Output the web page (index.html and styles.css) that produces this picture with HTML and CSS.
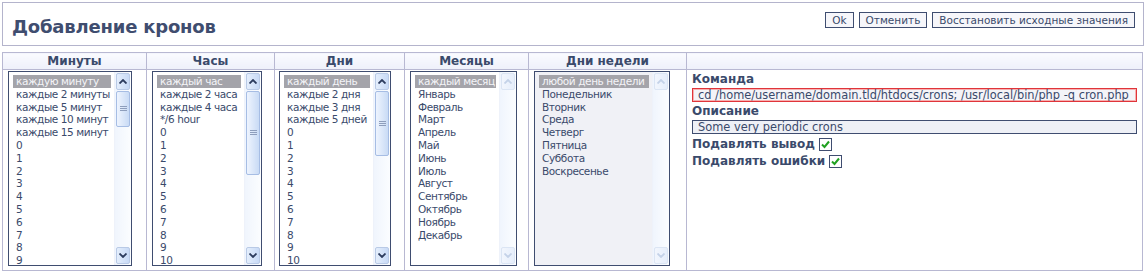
FILE: index.html
```html
<!DOCTYPE html>
<html lang="ru">
  <head>
    <meta charset="UTF-8" />
    <title>Добавление кронов</title>
    <link rel="stylesheet" href="styles.css">
  </head>
  <body>
    <div class="page-head">
      <h1>Добавление кронов</h1>
      <div class="actions">
        <button type="button">Ok</button>
        <button type="button">Отменить</button>
        <button type="button">Восстановить исходные значения</button>
      </div>
    </div>

    <table class="cron-form">
      <colgroup>
        <col class="c-min" /><col class="c-hour" /><col class="c-day" />
        <col class="c-month" /><col class="c-week" /><col />
      </colgroup>
      <tr>
        <th>Минуты</th>
        <th>Часы</th>
        <th>Дни</th>
        <th>Месяцы</th>
        <th>Дни недели</th>
        <th></th>
      </tr>
      <tr>
        <td>
          <div class="listbox lb-min">
            <ul class="options">
              <li class="selected">каждую минуту</li>
              <li>каждые 2 минуты</li>
              <li>каждые 5 минут</li>
              <li>каждые 10 минут</li>
              <li>каждые 15 минут</li>
              <li>0</li><li>1</li><li>2</li><li>3</li><li>4</li>
              <li>5</li><li>6</li><li>7</li><li>8</li><li>9</li><li>10</li>
            </ul>
            <div class="scrollbar">
              <span class="sb-btn"><svg viewBox="0 0 8 5"><path d="M0.5 4.5 L4 1 L7.5 4.5"/></svg></span>
              <div class="sb-track"><span class="sb-thumb thumb-min"><i></i></span></div>
              <span class="sb-btn"><svg viewBox="0 0 8 5"><path d="M0.5 0.5 L4 4 L7.5 0.5"/></svg></span>
            </div>
          </div>
        </td>
        <td>
          <div class="listbox lb-hour">
            <ul class="options">
              <li class="selected">каждый час</li>
              <li>каждые 2 часа</li>
              <li>каждые 4 часа</li>
              <li>*/6 hour</li>
              <li>0</li><li>1</li><li>2</li><li>3</li><li>4</li>
              <li>5</li><li>6</li><li>7</li><li>8</li><li>9</li><li>10</li>
            </ul>
            <div class="scrollbar">
              <span class="sb-btn"><svg viewBox="0 0 8 5"><path d="M0.5 4.5 L4 1 L7.5 4.5"/></svg></span>
              <div class="sb-track"><span class="sb-thumb thumb-hour"><i></i></span></div>
              <span class="sb-btn"><svg viewBox="0 0 8 5"><path d="M0.5 0.5 L4 4 L7.5 0.5"/></svg></span>
            </div>
          </div>
        </td>
        <td>
          <div class="listbox lb-day">
            <ul class="options">
              <li class="selected">каждый день</li>
              <li>каждые 2 дня</li>
              <li>каждые 3 дня</li>
              <li>каждые 5 дней</li>
              <li>0</li><li>1</li><li>2</li><li>3</li><li>4</li>
              <li>5</li><li>6</li><li>7</li><li>8</li><li>9</li><li>10</li>
            </ul>
            <div class="scrollbar">
              <span class="sb-btn"><svg viewBox="0 0 8 5"><path d="M0.5 4.5 L4 1 L7.5 4.5"/></svg></span>
              <div class="sb-track"><span class="sb-thumb thumb-day"><i></i></span></div>
              <span class="sb-btn"><svg viewBox="0 0 8 5"><path d="M0.5 0.5 L4 4 L7.5 0.5"/></svg></span>
            </div>
          </div>
        </td>
        <td>
          <div class="listbox lb-month">
            <ul class="options">
              <li class="selected">каждый месяц</li>
              <li>Январь</li>
              <li>Февраль</li>
              <li>Март</li>
              <li>Апрель</li>
              <li>Май</li>
              <li>Июнь</li>
              <li>Июль</li>
              <li>Август</li>
              <li>Сентябрь</li>
              <li>Октябрь</li>
              <li>Ноябрь</li>
              <li>Декабрь</li>
            </ul>
            <div class="scrollbar disabled">
              <span class="sb-btn"><svg viewBox="0 0 8 5"><path d="M0.5 4.5 L4 1 L7.5 4.5"/></svg></span>
              <div class="sb-track"></div>
              <span class="sb-btn"><svg viewBox="0 0 8 5"><path d="M0.5 0.5 L4 4 L7.5 0.5"/></svg></span>
            </div>
          </div>
        </td>
        <td>
          <div class="listbox lb-week">
            <ul class="options">
              <li class="selected">любой день недели</li>
              <li>Понедельник</li>
              <li>Вторник</li>
              <li>Среда</li>
              <li>Четверг</li>
              <li>Пятница</li>
              <li>Суббота</li>
              <li>Воскресенье</li>
            </ul>
            <div class="scrollbar disabled">
              <span class="sb-btn"><svg viewBox="0 0 8 5"><path d="M0.5 4.5 L4 1 L7.5 4.5"/></svg></span>
              <div class="sb-track"></div>
              <span class="sb-btn"><svg viewBox="0 0 8 5"><path d="M0.5 0.5 L4 4 L7.5 0.5"/></svg></span>
            </div>
          </div>
        </td>
        <td class="details">
          <label>Команда</label>
          <input type="text" class="field field-error" value="cd /home/username/domain.tld/htdocs/crons; /usr/local/bin/php -q cron.php" />
          <label>Описание</label>
          <input type="text" class="field" value="Some very periodic crons" />
          <label class="check">Подавлять вывод <span class="box"><svg viewBox="0 0 11 11"><path d="M2 5.5 L4.5 8 L9 2.5"/></svg></span></label>
          <label class="check">Подавлять ошибки <span class="box"><svg viewBox="0 0 11 11"><path d="M2 5.5 L4.5 8 L9 2.5"/></svg></span></label>
        </td>
      </tr>
    </table>
  </body>
</html>
```

FILE: styles.css
```css
body {
  font-family: "DejaVu Sans", Verdana, sans-serif;
  margin: 2px;
  padding: 0;
  color: #3a4a6b;
  background: #fff;
}
.page-head {
  display: flex;
  justify-content: space-between;
  align-items: flex-start;
  height: 42px;
  border: 1px solid #b4b4cc;
  padding: 0 8px 0 9px;
}
.page-head h1 {
  font-size: 18px;
  margin: 13px 0 0;
  color: #3f4d6f;
  letter-spacing: -0.2px;
}
.actions {
  display: flex;
  gap: 5px;
  margin-top: 9px;
}
.actions button {
  font-family: inherit;
  font-size: 10.5px;
  color: #3a4a6b;
  background: #f6f6fa;
  border: 1px solid #3f4d70;
  height: 16px;
  padding: 0 6px;
  line-height: 13px;
}
.cron-form {
  margin-top: 6px;
  width: 1141px;
  border-collapse: collapse;
  table-layout: fixed;
}
.c-min { width: 144px; }
.c-hour { width: 128px; }
.c-day { width: 130px; }
.c-month { width: 124px; }
.c-week { width: 158px; }
.cron-form th,
.cron-form td {
  border: 1px solid #b8b8d2;
  padding: 0;
}
.cron-form th {
  height: 16px;
  font-size: 12px;
  line-height: 16px;
  background: linear-gradient(#fafbff, #eef0fa);
  color: #3a4a6b;
}
.cron-form td {
  vertical-align: top;
  padding: 1px 5px 3px 5px;
  height: 196px;
}
.listbox {
  display: flex;
  height: 195px;
  border: 1px solid #3f4d70;
  box-sizing: border-box;
  background: #fff;
  overflow: hidden;
}
.lb-min { width: 124px; }
.lb-hour { width: 110px; }
.lb-day { width: 112px; margin-left: -1px; }
.lb-month { width: 107px; }
.lb-week { width: 136px; background: #f0f1f6; }
.options {
  list-style: none;
  margin: 0;
  padding: 3px 3px 0 4px;
  flex: 1;
  min-width: 0;
  font-size: 10.5px;
  letter-spacing: -0.4px;
  line-height: 12.8px;
  white-space: nowrap;
  overflow: hidden;
}
.options li {
  padding: 0 0 0 3px;
}
.options li.selected {
  background: #a4a4aa;
  color: #f4f4f8;
}
.scrollbar {
  width: 16px;
  display: flex;
  flex-direction: column;
  background: linear-gradient(90deg, #f0f5fd, #fbfdff);
  border-left: 1px solid #eef2fa;
}
.sb-btn {
  height: 15px;
  margin: 1px 1px 0;
  border: 1px solid #b9cae6;
  border-radius: 2px;
  background: linear-gradient(90deg, #e4eefc, #c8daf6);
  display: flex;
  align-items: center;
  justify-content: center;
}
.sb-btn:last-child {
  margin: 0 1px 1px;
}
.sb-btn svg {
  width: 8px;
  height: 5px;
  fill: none;
  stroke: #2d3c5e;
  stroke-width: 1.8;
}
.sb-track {
  flex: 1;
  padding-top: 1px;
}
.sb-thumb {
  display: flex;
  align-items: center;
  justify-content: center;
  margin: 0 1px;
  border: 1px solid #a6bde4;
  border-radius: 2px;
  background: linear-gradient(90deg, #eef4fe, #c9dbf5);
}
.sb-thumb i {
  width: 7px;
  height: 6px;
  background: repeating-linear-gradient(#8e9ebc 0 1px, transparent 1px 2px);
}
.thumb-min { height: 34px; }
.thumb-hour { height: 82px; }
.thumb-day { height: 63px; }
.scrollbar.disabled .sb-btn {
  border-color: #dbe5f4;
  background: linear-gradient(90deg, #f2f6fd, #e6eefb);
}
.scrollbar.disabled .sb-btn svg {
  stroke: #c4d2e8;
}
.details label {
  display: block;
  font-size: 12px;
  font-weight: bold;
  line-height: 15px;
  color: #3a4a6b;
}
.details .field {
  display: block;
  width: 100%;
  box-sizing: border-box;
  height: 14px;
  margin: 1px 0 2px;
  padding: 0 5px;
  font-family: inherit;
  font-size: 11.4px;
  color: #3a4a6b;
  border: 1px solid #3f4d70;
  background: #eef0f6;
}
.details .field-error {
  border-color: #e0343a;
  box-shadow: inset 0 0 0 1px #f6b0b0;
  background: #f4f4f8;
}
.details label:first-child {
  margin-top: 1px;
}
.details .check {
  display: flex;
  align-items: center;
  gap: 4px;
  line-height: 17px;
  margin-top: 1px;
}
.details .check + .check {
  margin-top: 0;
}
.box {
  width: 11px;
  height: 11px;
  border: 1px solid #3f4d70;
  background: #fff;
  display: inline-flex;
}
.box svg {
  width: 11px;
  height: 11px;
  fill: none;
  stroke: #21a121;
  stroke-width: 2;
}
```
